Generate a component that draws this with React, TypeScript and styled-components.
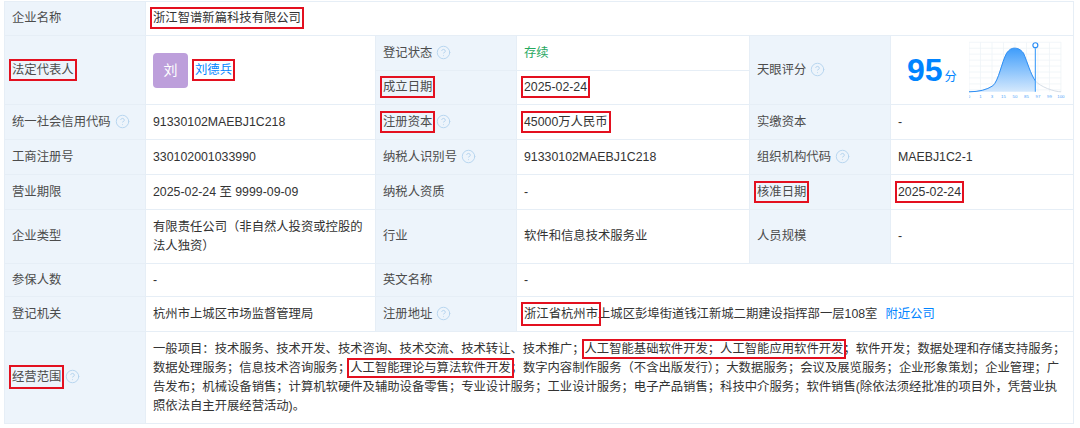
import { CircleHelp } from "lucide-react";
import styled, { createGlobalStyle } from "styled-components";

const GlobalStyle = createGlobalStyle`
  html, body {
    margin: 0;
    background: #fff;
  }
  body {
    font-family: "Liberation Sans", "Noto Sans CJK SC", sans-serif;
    font-size: 12.33px;
    line-height: 19px;
    color: #333;
  }
`;

const Page = styled.div`
  width: 1080px;
  height: 428px;
  padding: 1px 0 0 4px;
  box-sizing: border-box;
  overflow: hidden;
`;

const Table = styled.table`
  width: 1069px;
  table-layout: fixed;
  border-collapse: collapse;
`;

const Row = styled.tr<{ $height: number }>`
  height: ${(p) => p.$height}px;
`;

const Label = styled.td`
  padding: 0 7px;
  background: #edf4fb;
  border: 1px solid #e6eef6;
  color: #4c4c4c;
  white-space: nowrap;
`;

const Value = styled.td`
  padding: 0 7px;
  background: #fff;
  border: 1px solid #e6eef6;
  vertical-align: middle;
`;

const Marked = styled.span`
  padding: 1px 0;
  outline: 2px solid #e3101f;
  outline-offset: 1px;
`;

const TightMark = styled(Marked)`
  padding: 0;
`;

const TallMark = styled(Marked)`
  padding: 2px 0;
`;

const Help = styled(CircleHelp).attrs({ size: 15, strokeWidth: 1.5 })`
  margin-left: 4px;
  color: #b4d3ee;
  vertical-align: -3px;
`;

const Person = styled.div`
  display: flex;
  align-items: center;
  gap: 7px;
`;

const Avatar = styled.div`
  width: 35px;
  height: 35px;
  display: flex;
  align-items: center;
  justify-content: center;
  border-radius: 4px;
  background: #bd9fdb;
  color: #fff;
  font-size: 14px;
`;

const Link = styled.span`
  color: #0084ff;
`;

const Status = styled.span`
  color: #27a85f;
`;

const Near = styled(Link)`
  margin-left: 8px;
`;

const ScoreBox = styled.div`
  display: flex;
  align-items: center;
  padding-left: 9px;
`;

const Score = styled.div`
  width: 62px;
  flex-shrink: 0;
  color: #0084ff;
`;

const ScoreNum = styled.b`
  font-size: 32px;
  line-height: 36px;
  margin-right: 2px;
`;

const Chart = () => {
  const ticks = ["0", "1", "3", "15", "50", "85", "97", "99", "100"];
  const curve = "M0 52C10 52 18 50 24 46C30 41 33 22 38 13C41 9 43 8 46 8C49 8 52 9 55 13C59 22 62 34 67 41C72 47 86 52 93 52";
  return (
    <svg width="98" height="60" viewBox="0 0 98 60">
      <defs>
        <linearGradient id="bell" x1="0" y1="0" x2="0" y2="1">
          <stop offset="0" stopColor="#3f9dfb" />
          <stop offset="1" stopColor="#d5e9fd" />
        </linearGradient>
        <clipPath id="left">
          <rect x="0" y="0" width="67" height="60" />
        </clipPath>
      </defs>
      {ticks.map((t, i) => (
        <line key={t} x1={i * 11.6} x2={i * 11.6} y1="2" y2="52" stroke="#eff3f8" strokeWidth="0.8" />
      ))}
      {[2, 8, 14, 20, 26, 32, 38, 44, 50].map((y) => (
        <line key={y} x1="0" x2="93" y1={y} y2={y} stroke="#eff3f8" strokeWidth="0.8" />
      ))}
      <path d={curve} fill="none" stroke="#d4dde6" strokeWidth="1" />
      <g clipPath="url(#left)">
        <path d={curve + "V52H0Z"} fill="url(#bell)" />
        <path d={curve} fill="none" stroke="#2b8ef5" strokeWidth="1" />
      </g>
      <line x1="67" x2="67" y1="8" y2="52" stroke="#4ea5fa" strokeWidth="1.2" />
      <circle cx="67" cy="5" r="2.5" fill="#fff" stroke="#2b8ef5" strokeWidth="1.2" />
      {ticks.map((t, i) => (
        <text key={t} x={i * 11.6} y="58" fontSize="4.4" textAnchor="middle" fill="#4ea5fa">
          {t}
        </text>
      ))}
    </svg>
  );
};

export default function App() {
  return (
    <Page>
      <GlobalStyle />
      <Table>
        <colgroup>
          <col width="141" />
          <col width="230" />
          <col width="141" />
          <col width="233" />
          <col width="141" />
          <col width="183" />
        </colgroup>
        <tbody>
          <Row $height={34}>
            <Label>企业名称</Label>
            <Value colSpan={5}>
              <Marked>浙江智谱新篇科技有限公司</Marked>
            </Value>
          </Row>
          <Row $height={35}>
            <Label rowSpan={2}>
              <Marked>法定代表人</Marked>
            </Label>
            <Value rowSpan={2}>
              <Person>
                <Avatar>刘</Avatar>
                <Link>
                  <Marked>刘德兵</Marked>
                </Link>
              </Person>
            </Value>
            <Label>
              登记状态
              <Help />
            </Label>
            <Value>
              <Status>存续</Status>
            </Value>
            <Label rowSpan={2}>
              天眼评分
              <Help />
            </Label>
            <Value rowSpan={2}>
              <ScoreBox>
                <Score>
                  <ScoreNum>95</ScoreNum>分
                </Score>
                <Chart />
              </ScoreBox>
            </Value>
          </Row>
          <Row $height={34}>
            <Label>
              <Marked>成立日期</Marked>
            </Label>
            <Value>
              <Marked>2025-02-24</Marked>
            </Value>
          </Row>
          <Row $height={35}>
            <Label>
              统一社会信用代码
              <Help />
            </Label>
            <Value>91330102MAEBJ1C218</Value>
            <Label>
              <Marked>注册资本</Marked>
              <Help />
            </Label>
            <Value>
              <Marked>45000万人民币</Marked>
            </Value>
            <Label>实缴资本</Label>
            <Value>-</Value>
          </Row>
          <Row $height={35}>
            <Label>工商注册号</Label>
            <Value>330102001033990</Value>
            <Label>
              纳税人识别号
              <Help />
            </Label>
            <Value>91330102MAEBJ1C218</Value>
            <Label>
              组织机构代码
              <Help />
            </Label>
            <Value>MAEBJ1C2-1</Value>
          </Row>
          <Row $height={35}>
            <Label>营业期限</Label>
            <Value>2025-02-24 至 9999-09-09</Value>
            <Label>纳税人资质</Label>
            <Value>-</Value>
            <Label>
              <Marked>核准日期</Marked>
            </Label>
            <Value>
              <Marked>2025-02-24</Marked>
            </Value>
          </Row>
          <Row $height={54}>
            <Label>企业类型</Label>
            <Value>有限责任公司（非自然人投资或控股的法人独资）</Value>
            <Label>行业</Label>
            <Value>软件和信息技术服务业</Value>
            <Label>人员规模</Label>
            <Value>-</Value>
          </Row>
          <Row $height={33}>
            <Label>参保人数</Label>
            <Value>-</Value>
            <Label>英文名称</Label>
            <Value colSpan={3}>-</Value>
          </Row>
          <Row $height={35}>
            <Label>登记机关</Label>
            <Value>杭州市上城区市场监督管理局</Value>
            <Label>
              注册地址
              <Help />
            </Label>
            <Value colSpan={3}>
              <TallMark>浙江省杭州市</TallMark>上城区彭埠街道钱江新城二期建设指挥部一层108室
              <Near>附近公司</Near>
            </Value>
          </Row>
          <Row $height={92}>
            <Label>
              <TallMark>经营范围</TallMark>
              <Help />
            </Label>
            <Value colSpan={5}>
              一般项目：技术服务、技术开发、技术咨询、技术交流、技术转让、技术推广；
              <TightMark>人工智能基础软件开发；人工智能应用软件开发</TightMark>
              ；软件开发；数据处理和存储支持服务；数据处理服务；信息技术咨询服务；
              <TightMark>人工智能理论与算法软件开发</TightMark>
              ；数字内容制作服务（不含出版发行）；大数据服务；会议及展览服务；企业形象策划；企业管理；广告发布；机械设备销售；计算机软硬件及辅助设备零售；专业设计服务；工业设计服务；电子产品销售；科技中介服务；软件销售(除依法须经批准的项目外，凭营业执照依法自主开展经营活动)。
            </Value>
          </Row>
        </tbody>
      </Table>
    </Page>
  );
}
